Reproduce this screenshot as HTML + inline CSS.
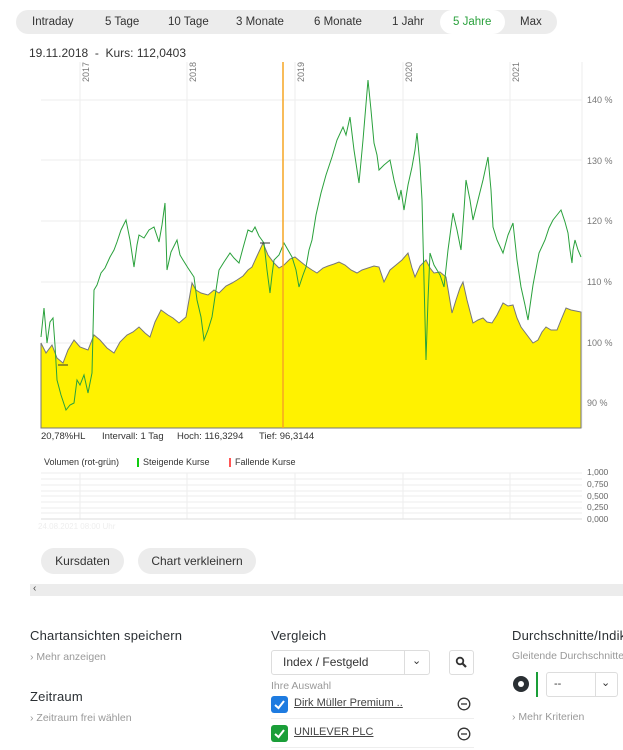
<!DOCTYPE html>
<html><head><meta charset="utf-8">
<style>
*{margin:0;padding:0;box-sizing:border-box}
html,body{width:623px;height:750px;overflow:hidden}
body{background:#fff;font-family:"Liberation Sans",sans-serif;color:#333}
#w{position:relative;width:623px;height:750px;overflow:hidden}
.a{position:absolute;white-space:nowrap}
.tabs{left:16px;top:10px;width:541px;height:24px;background:#ececec;border-radius:12px}
.tab{position:absolute;top:10px;height:24px;line-height:24px;font-size:11.5px;color:#333}
.btn{position:absolute;background:#ececec;border-radius:13px;height:26px;line-height:26px;font-size:12px;text-align:center;color:#333}
.h{font-size:13px;color:#2a2f33;letter-spacing:.2px}
.lk{font-size:10.5px;color:#999}
.sel{position:absolute;border:1px solid #ddd;border-radius:3px;background:#fff}
</style></head><body><div id="w">
<div class="a tabs"></div>
<div class="a" style="left:440px;top:10px;width:65px;height:24px;background:#fff;border-radius:12px"></div>
<div class="tab" style="left:32px">Intraday</div>
<div class="tab" style="left:105px">5 Tage</div>
<div class="tab" style="left:168px">10 Tage</div>
<div class="tab" style="left:236px">3 Monate</div>
<div class="tab" style="left:314px">6 Monate</div>
<div class="tab" style="left:392px">1 Jahr</div>
<div class="tab" style="left:453px;color:#2aa13c">5 Jahre</div>
<div class="tab" style="left:520px">Max</div>
<div class="a" style="left:29px;top:46px;font-size:12px;color:#333">19.11.2018 &nbsp;-&nbsp; Kurs: 112,0403</div>

<svg class="a" style="left:0;top:0" width="623" height="750">
<g stroke="#eee" stroke-width="1">
<line x1="41" y1="100" x2="582" y2="100"/><line x1="41" y1="160" x2="582" y2="160"/><line x1="41" y1="221" x2="582" y2="221"/><line x1="41" y1="282" x2="582" y2="282"/><line x1="41" y1="343" x2="582" y2="343"/><line x1="41" y1="403" x2="582" y2="403"/>
<line x1="80" y1="62" x2="80" y2="428"/><line x1="187" y1="62" x2="187" y2="428"/><line x1="295" y1="62" x2="295" y2="428"/><line x1="403" y1="62" x2="403" y2="428"/><line x1="510" y1="62" x2="510" y2="428"/>
<line x1="582" y1="62" x2="582" y2="428"/>
</g>
<g font-size="9" fill="#777">
<text transform="translate(89,82) rotate(-90)">2017</text>
<text transform="translate(196,82) rotate(-90)">2018</text>
<text transform="translate(304,82) rotate(-90)">2019</text>
<text transform="translate(412,82) rotate(-90)">2020</text>
<text transform="translate(519,82) rotate(-90)">2021</text>
<text x="587" y="103">140 %</text><text x="587" y="164">130 %</text><text x="587" y="224">120 %</text><text x="587" y="285">110 %</text><text x="587" y="346">100 %</text><text x="587" y="406">90 %</text>
</g>
<path fill="#fff200" stroke="#777" stroke-width="1" d="M41,343 L46,353 L52,345 L57,358 L63,363 L68,350 L74,340 L80,347 L88,350 L94,335 L100,340 L107,348 L114,353 L120,342 L127,335 L133,332 L139,327 L145,333 L150,337 L155,322 L161,310 L168,315 L173,318 L179,323 L186,317 L192,283 L196,290 L201,293 L208,295 L214,290 L219,293 L226,286 L232,283 L237,280 L243,276 L248,270 L252,267 L257,256 L263,243 L268,255 L274,263 L279,268 L284,265 L290,259 L295,257 L301,262 L306,266 L312,270 L317,273 L323,268 L328,266 L334,264 L339,262 L345,265 L351,270 L357,273 L362,270 L368,268 L374,266 L379,267 L384,282 L390,270 L396,265 L402,260 L408,253 L412,268 L415,277 L420,266 L426,260 L430,268 L434,273 L440,272 L446,277 L449,295 L452,313 L456,300 L460,288 L463,282 L467,300 L473,323 L478,320 L483,318 L487,322 L492,323 L497,315 L503,303 L508,306 L513,305 L517,318 L521,327 L527,335 L533,343 L538,340 L542,332 L546,327 L551,330 L557,330 L561,320 L566,308 L571,310 L576,311 L581,312 L581,428 L41,428 Z"/>
<polyline fill="none" stroke="#2aa13c" stroke-width="1" points="41,337 44,308 47,343 50,322 53,318 55,345 57,380 61,395 66,410 70,405 74,403 77,380 80,385 84,375 88,393 92,373 94,290 97,285 101,273 105,268 110,257 114,250 117,242 121,230 126,220 130,240 134,267 137,245 139,235 144,238 149,230 154,227 159,242 162,225 165,203 167,270 171,252 177,240 180,255 183,260 188,268 194,277 197,300 201,317 204,340 208,330 212,317 216,290 219,270 224,262 230,253 234,258 239,263 243,248 248,230 252,232 255,227 259,236 264,243 267,270 270,293 272,275 274,260 279,255 284,243 288,250 292,257 296,270 299,287 303,275 306,267 309,250 312,240 316,215 321,193 326,175 332,157 337,140 343,127 346,135 350,117 354,150 359,183 363,140 368,80 371,110 374,143 377,155 379,170 384,165 390,160 394,180 399,200 401,190 404,210 408,185 412,167 415,150 417,133 420,165 422,200 424,280 426,360 428,300 430,253 434,265 440,275 444,287 448,250 453,213 457,230 461,250 464,210 466,180 470,200 473,220 478,200 483,180 488,157 491,190 493,227 497,240 503,253 508,235 513,223 517,260 521,287 525,305 528,320 533,285 539,253 545,240 549,228 553,220 557,215 561,210 565,222 568,233 570,250 572,263 573,250 575,240 578,250 581,257"/>
<line x1="283" y1="62" x2="283" y2="428" stroke="#f5a623" stroke-width="1.5"/>
<line x1="260" y1="243" x2="270" y2="243" stroke="#333" stroke-width="1"/>
<line x1="58" y1="365" x2="68" y2="365" stroke="#333" stroke-width="1"/>
<g stroke="#eee" stroke-width="1">
<line x1="41" y1="473" x2="582" y2="473"/><line x1="41" y1="479" x2="582" y2="479"/><line x1="41" y1="485" x2="582" y2="485"/><line x1="41" y1="491" x2="582" y2="491"/><line x1="41" y1="496" x2="582" y2="496"/><line x1="41" y1="502" x2="582" y2="502"/><line x1="41" y1="508" x2="582" y2="508"/><line x1="41" y1="513" x2="582" y2="513"/>
<line x1="80" y1="473" x2="80" y2="519"/><line x1="187" y1="473" x2="187" y2="519"/><line x1="295" y1="473" x2="295" y2="519"/><line x1="403" y1="473" x2="403" y2="519"/><line x1="510" y1="473" x2="510" y2="519"/>
</g>
<line x1="41" y1="519" x2="582" y2="519" stroke="#ddd"/>
<g font-size="8.5" fill="#666">
<text x="587" y="475">1,000</text><text x="587" y="487">0,750</text><text x="587" y="499">0,500</text><text x="587" y="510">0,250</text><text x="587" y="522">0,000</text>
</g>
<text x="38" y="529" font-size="8" fill="#eee">24.08.2021 08:00 Uhr</text>
</svg>

<div class="a" style="left:41px;top:431px;font-size:9.5px;color:#333">20,78%HL</div>
<div class="a" style="left:102px;top:431px;font-size:9.5px">Intervall: 1 Tag</div>
<div class="a" style="left:177px;top:431px;font-size:9.5px">Hoch: 116,3294</div>
<div class="a" style="left:259px;top:431px;font-size:9.5px">Tief: 96,3144</div>
<div class="a" style="left:44px;top:457px;font-size:9px">Volumen (rot-grün)</div>
<div class="a" style="left:137px;top:458px;width:2px;height:9px;background:#1c1"></div>
<div class="a" style="left:143px;top:457px;font-size:9px">Steigende Kurse</div>
<div class="a" style="left:229px;top:458px;width:2px;height:9px;background:#f55"></div>
<div class="a" style="left:235px;top:457px;font-size:9px">Fallende Kurse</div>

<div class="btn" style="left:41px;top:548px;width:83px">Kursdaten</div>
<div class="btn" style="left:138px;top:548px;width:118px">Chart verkleinern</div>
<div class="a" style="left:30px;top:584px;width:593px;height:12px;background:#ececec"></div>
<div class="a" style="left:33px;top:583px;font-size:10px;color:#444">‹</div>

<div class="a h" style="left:30px;top:628px">Chartansichten speichern</div>
<div class="a lk" style="left:30px;top:651px">›&nbsp;Mehr anzeigen</div>
<div class="a h" style="left:30px;top:689px">Zeitraum</div>
<div class="a lk" style="left:30px;top:712px">›&nbsp;Zeitraum frei wählen</div>

<div class="a h" style="left:271px;top:628px">Vergleich</div>
<div class="sel" style="left:271px;top:650px;width:159px;height:25px"></div>
<div class="a" style="left:404px;top:650px;width:1px;height:25px;background:#ddd"></div>
<div class="a" style="left:283px;top:655px;font-size:12px;color:#333">Index / Festgeld</div>
<div class="a" style="left:412px;top:654px;font-size:11px;color:#333">⌄</div>
<div class="sel" style="left:449px;top:650px;width:25px;height:25px"></div>
<svg class="a" style="left:455px;top:656px" width="13" height="13"><circle cx="5" cy="5" r="3.3" fill="none" stroke="#333" stroke-width="1.8"/><line x1="7.5" y1="7.5" x2="11" y2="11" stroke="#333" stroke-width="2.2"/></svg>
<div class="a lk" style="left:271px;top:680px">Ihre Auswahl</div>
<div class="a" style="left:271px;top:696px;width:17px;height:17px;background:#1e7be0;border-radius:3px"></div>
<div class="a" style="left:271px;top:725px;width:17px;height:17px;background:#1a9e38;border-radius:3px"></div>
<svg class="a" style="left:271px;top:696px" width="17" height="46"><polyline points="4,9 7.5,12 13,5" fill="none" stroke="#fff" stroke-width="2"/><polyline points="4,38 7.5,41 13,34" fill="none" stroke="#fff" stroke-width="2"/></svg>
<div class="a" style="left:294px;top:697px;font-size:11px;color:#444;text-decoration:underline">Dirk Müller Premium ..</div>
<div class="a" style="left:294px;top:726px;font-size:11px;color:#444;text-decoration:underline">UNILEVER PLC</div>
<svg class="a" style="left:457px;top:697px" width="15" height="45"><circle cx="7" cy="7" r="5.8" fill="none" stroke="#333" stroke-width="1.3"/><line x1="4" y1="7" x2="10" y2="7" stroke="#333" stroke-width="1.3"/><circle cx="7" cy="37" r="5.8" fill="none" stroke="#333" stroke-width="1.3"/><line x1="4" y1="37" x2="10" y2="37" stroke="#333" stroke-width="1.3"/></svg>
<div class="a" style="left:271px;top:718px;width:203px;height:1px;background:#eee"></div>
<div class="a" style="left:271px;top:747px;width:203px;height:1px;background:#eee"></div>

<div class="a h" style="left:512px;top:628px">Durchschnitte/Indikatoren</div>
<div class="a lk" style="left:512px;top:650px">Gleitende Durchschnitte</div>
<div class="a" style="left:513px;top:676px;width:16px;height:16px;border-radius:50%;background:#2a2f33"></div>
<div class="a" style="left:518px;top:681px;width:6px;height:6px;border-radius:50%;background:#fff"></div>
<div class="a" style="left:536px;top:672px;width:2px;height:25px;background:#1a9e38"></div>
<div class="sel" style="left:546px;top:672px;width:72px;height:25px"></div>
<div class="a" style="left:595px;top:672px;width:1px;height:25px;background:#ddd"></div>
<div class="a" style="left:554px;top:678px;font-size:11px">--</div>
<div class="a" style="left:601px;top:676px;font-size:11px">⌄</div>
<div class="a lk" style="left:512px;top:711px">›&nbsp;Mehr Kriterien</div>
</div></body></html>
